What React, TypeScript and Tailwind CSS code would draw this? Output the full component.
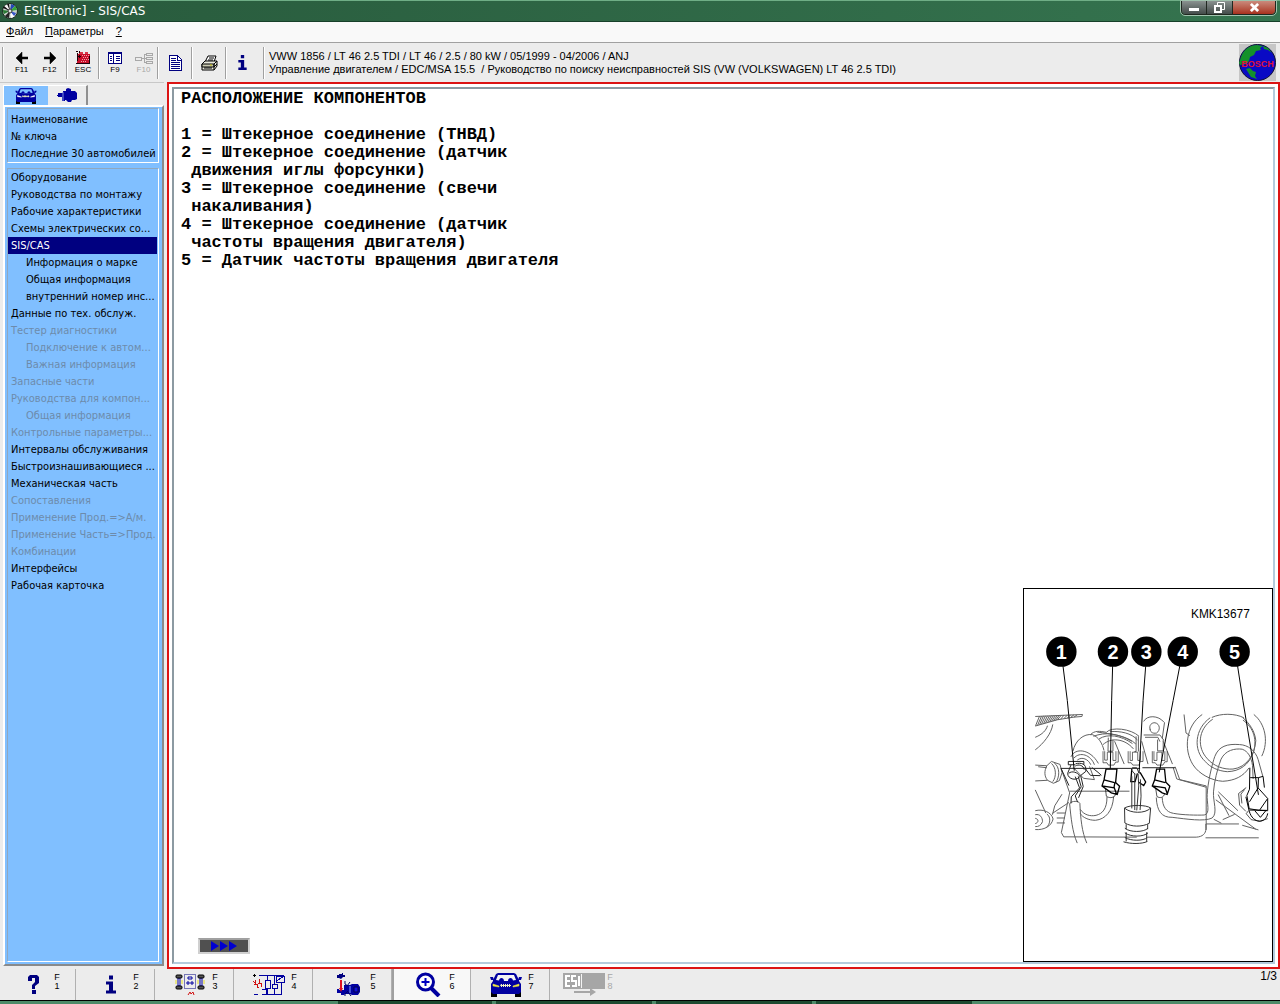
import type { ReactNode } from "react";

const TAHOMA = "font-['DejaVu_Sans_Condensed','Noto_Sans',sans-serif]";

const vehicleLinks = ["Наименование", "№ ключа", "Последние 30 автомобилей"];

type NavItem = { label: string; sub?: boolean; disabled?: boolean; active?: boolean };

const navItems: NavItem[] = [
  { label: "Оборудование" },
  { label: "Руководства по монтажу" },
  { label: "Рабочие характеристики" },
  { label: "Схемы электрических со..." },
  { label: "SIS/CAS", active: true },
  { label: "Информация о марке", sub: true },
  { label: "Общая информация", sub: true },
  { label: "внутренний номер инс...", sub: true },
  { label: "Данные по тех. обслуж." },
  { label: "Тестер диагностики", disabled: true },
  { label: "Подключение к автом...", sub: true, disabled: true },
  { label: "Важная информация", sub: true, disabled: true },
  { label: "Запасные части", disabled: true },
  { label: "Руководства для компон...", disabled: true },
  { label: "Общая информация", sub: true, disabled: true },
  { label: "Контрольные параметры...", disabled: true },
  { label: "Интервалы обслуживания" },
  { label: "Быстроизнашивающиеся ..." },
  { label: "Механическая часть" },
  { label: "Сопоставления", disabled: true },
  { label: "Применение Прод.=>А/м.", disabled: true },
  { label: "Применение Часть=>Прод.", disabled: true },
  { label: "Комбинации", disabled: true },
  { label: "Интерфейсы" },
  { label: "Рабочая карточка" },
];

const documentText = `РАСПОЛОЖЕНИЕ КОМПОНЕНТОВ

1 = Штекерное соединение (ТНВД)
2 = Штекерное соединение (датчик
 движения иглы форсунки)
3 = Штекерное соединение (свечи
 накаливания)
4 = Штекерное соединение (датчик
 частоты вращения двигателя)
5 = Датчик частоты вращения двигателя`;

function DiscIcon() {
  return (
    <svg viewBox="0 0 16 16" className="size-4" aria-hidden="true">
      <circle cx="8" cy="8" r="7.5" fill="#c9d2cb" stroke="#1b2a20" />
      <path d="M8 8 2 3.5A7 7 0 0 1 7 1Z" fill="#f4f4f4" />
      <path d="M8 8 9 1a7 7 0 0 1 4 2Z" fill="#2446b8" />
      <path d="M8 8 13 3a7 7 0 0 1 2 4Z" fill="#35a63a" />
      <path d="M8 8 1 7a7 7 0 0 0 1 4Z" fill="#2b7a35" />
      <path d="M8 8 3 13a7 7 0 0 0 4 2Z" fill="#222" />
      <path d="M8 8 9 15a7 7 0 0 0 4-2Z" fill="#fff" />
      <path d="M8 8 14 10a7 7 0 0 1-2 3Z" fill="#3756c8" />
      <path d="M1 5 8 8 2 3ZM5 1 8 8 7 1Z" fill="#111" />
      <circle cx="8" cy="8" r="2" fill="#dfe5e0" stroke="#333" />
    </svg>
  );
}

function ArrowIcon({ right = false }: { right?: boolean }) {
  return (
    <svg viewBox="0 0 12 12" className="size-3" aria-hidden="true">
      <path d={right ? "M0 5h6V0l6 6-6 6V7H0Z" : "M12 5H6V0L0 6l6 6V7h6Z"} fill="#000" stroke="#000" strokeWidth="0.5" />
    </svg>
  );
}

function EscIcon() {
  return (
    <svg viewBox="0 0 14 13" className="h-[13px] w-3.5" shapeRendering="crispEdges" aria-hidden="true">
      <path d="M1 3h13v9H1z" fill="#c8102a" />
      <path d="M3 1h4v2H3zM9 1h3v2H9z" fill="#d8374a" />
      <path d="M6 4h1v1H6zM8 4h1v1H8zM10 4h1v1h-1zM12 4h1v1h-1zM7 6h1v1H7zM9 6h1v1H9zM11 6h1v1h-1zM6 8h1v1H6zM8 8h1v1H8zM10 8h1v1h-1zM12 8h1v1h-1zM5 10h1v1H5zM7 10h1v1H7zM9 10h1v1H9z" fill="#f6a0aa" />
      <path d="M0 0h2v1H0zM3 0h1v2H3zM1 2h1v8H1zM3 4h1v3H3zM2 5h3v1H2zM0 12h14v1H0zM13 5h1v7h-1z" fill="#200008" />
    </svg>
  );
}

function ListIcon() {
  return (
    <svg viewBox="0 0 14 12" className="h-3 w-3.5" shapeRendering="crispEdges" aria-hidden="true">
      <path d="M0 0h14v12H0z" fill="#000080" />
      <path d="M1 2h4v9H1zM6 2h7v9H6z" fill="#fff" />
      <path d="M2 4h2v1H2zM2 6h2v1H2zM2 8h2v1H2zM8 4h4v1H8zM8 6h4v1H8zM8 8h4v1H8z" fill="#000080" />
    </svg>
  );
}

function TreeIcon() {
  return (
    <svg viewBox="0 0 18 12" className="h-3 w-[18px]" fill="none" shapeRendering="crispEdges" aria-hidden="true">
      <path d="M0 5h6v3H0zM6 6h3M9 2v8M9 2h2M9 6h2M9 10h2M11 1h6v2h-6zM11 5h6v2h-6zM11 9h6v2h-6z" stroke="#a8a8a8" />
    </svg>
  );
}

function PageIcon() {
  return (
    <svg viewBox="0 0 13 16" className="h-4 w-[13px]" shapeRendering="crispEdges" aria-hidden="true">
      <path d="M.5.5h8l4 4v11H.5z" fill="#fff" stroke="#000080" />
      <path d="M8 0v5h5" fill="none" stroke="#000080" />
      <path d="M2 3h5v1H2zM2 5h5v1H2zM2 7h9v1H2zM2 9h9v1H2zM2 11h9v1H2zM2 13h9v1H2z" fill="#000080" />
    </svg>
  );
}

function PrinterIcon() {
  return (
    <svg viewBox="0 0 17 16" className="h-4 w-[17px]" aria-hidden="true">
      <path d="M4 7 7 1h8l-2 6" fill="#fff" stroke="#000" />
      <path d="M8 3h5M7 5h5" stroke="#000" />
      <path d="M1 9 4 6h12v5l-3 4H1z" fill="#e8e8dc" stroke="#000" />
      <path d="M1 9h12v3H1zM13 9l3-3M13 12l3-3M13 15V9" fill="#c8c8b0" stroke="#000" />
      <path d="M3 13h8" stroke="#000" />
      <path d="M9 10h2" stroke="#c8c000" />
    </svg>
  );
}

function InfoIcon({ className }: { className: string }) {
  return (
    <svg viewBox="0 0 10 18" className={className} aria-hidden="true">
      <path d="M3 0h4v4H3zM0 6h7v9h3v3H0v-3h3V9H0z" fill="#000080" />
    </svg>
  );
}

function CarIcon({ className, detailed = false }: { className: string; detailed?: boolean }) {
  return (
    <svg viewBox="0 0 32 24" className={className} aria-hidden="true">
      <path d="M1 17h6v7H1zM25 17h6v7h-6z" fill="#000" />
      <path d="M6 1 8 0h16l2 1 3 6v1l2 3v8l-2 2H3l-2-2v-8l2-3V7z" fill="#0000a0" />
      <path d="M0 4h3l1 3H1zM32 4h-3l-1 3h3z" fill="#0000a0" />
      <path d="M8 2h16l2 5-6 1H12L6 7z" fill={detailed ? "#f4f4f4" : "#80bfff"} />
      <path d="M9 8c0-4 5-4 5 0zM18 8c0-4 5-4 5 0z" fill="#0000a0" />
      <path d="m3 11 6 2v1l-6-1zM29 11l-6 2v1l6-1z" fill={detailed ? "#f0e840" : "#fff"} stroke={detailed ? "#f0e840" : "#fff"} strokeWidth="0.5" />
      <path d="M11 11h1v1h1v-1h1v1h1v-1h1v1h1v-1h1v1h1v-1h1v1h1v1h-1v1h-1v-1h-1v1h-1v-1h-1v1h-1v-1h-1v1h-1v-1h-1v1h-1v-1h-1z" fill="#f0f0c0" />
    </svg>
  );
}

function PumpIcon() {
  return (
    <svg viewBox="0 0 20 15" className="h-[15px] w-5" aria-hidden="true">
      <path d="M0 7h1V5h5V3h3V1l2-1 3 1v2h4l2 2v6l-2 1h-3l-1 2h-3l-2-2H8v1H5V9H1V8H0z" fill="#0000a0" />
      <path d="M6 4v9" stroke="#8090e0" />
    </svg>
  );
}

function BoschLogo() {
  return (
    <svg viewBox="0 0 37 37" className="size-[37px] shrink-0" role="img" aria-label="BOSCH">
      <path d="M0 0h37v37H0z" fill="#c6c6c6" />
      <circle cx="18.5" cy="18.5" r="18" fill="#0a0ac4" stroke="#101030" />
      <path d="M2 13C5 5 11 1 18 1l6 1-3 2 1 2-5 1-2 4-4 2-1 4-3 3-6 1-1-2z" fill="#14912a" />
      <path d="m24 2 5 2 4 5-4-3-4-1zM7 25l4-1 3 3 3 1-1 4 2 3-6-2z" fill="#14912a" />
      <text x="18.5" y="23" textAnchor="middle" fontFamily="Liberation Sans, sans-serif" fontSize="9" fontWeight="bold" fill="#e01038">BOSCH</text>
    </svg>
  );
}

function SensorLayoutIcon() {
  return (
    <svg viewBox="0 0 30 22" className="h-[22px] w-[30px]" aria-hidden="true">
      <path d="M9.5.5h11v14h-11z" fill="none" stroke="#000080" strokeDasharray="1 1" />
      <path d="M13 3h4v2h-4zM12 8h2v2h-2zM16 8h2v2h-2zM3 4h2v8H3zM25 4h2v8h-2z" fill="none" stroke="#0000a0" />
      <path d="M1 6v4M7 6v4M23 6v4M29 6v4" stroke="#e8e020" />
      <g fill="#555" stroke="#000">
        <rect x="1" y="1" width="6" height="3" rx="1" /><rect x="23" y="1" width="6" height="3" rx="1" />
        <rect x="1" y="12" width="6" height="3" rx="1" /><rect x="23" y="12" width="6" height="3" rx="1" />
      </g>
      <path d="m13 21 2-3 1 2 2-2 1 3" fill="none" stroke="#d01010" />
    </svg>
  );
}

function CircuitIcon() {
  return (
    <svg viewBox="0 0 32 22" className="h-[22px] w-8" fill="none" shapeRendering="crispEdges" aria-hidden="true">
      <path d="M6 1.500h25M9 20.500h20M1 20.500h4M14.500 2v4M12 6h5v8h-5zM14.500 14v7M19 10h5v4h-5zM21.500 2v8M23 2h8v6h-8zM23 7l7-4M28.500 8v12M9 15h4v5M21 14v6" stroke="#0000a0" />
      <path d="M0 1.500h3M1.500 0v3" stroke="#000" />
      <path d="M2 6v4h2v4M6 5v4h2v4M1 10h2M5 9h2M0 7l3 3M4 12l2 2" stroke="#d01010" />
    </svg>
  );
}

function EngineIcon() {
  return (
    <svg viewBox="0 0 24 24" className="size-6" aria-hidden="true">
      <path d="M1 2h2V1h3V0h1v2h2v2H7l-2 2-2-1H1z" fill="#000080" />
      <path d="M5 7v10" stroke="#e01020" strokeWidth="2" />
      <path d="M1 16h2v1h5v-5h6l2-1h6l2 3v5l-2 3h-6l-2-1H9l-1 1H5v-2H1z" fill="#0000a0" />
      <path d="M3 15h4l-2 4z" fill="#e01020" />
      <path d="M9 8v3l3 2M14 9l-3 4M9 23v-2l3-3M15 23l-3-4" fill="none" stroke="#000060" />
      <path d="M14 13v7" stroke="#80a0ff" />
      <path d="M18 14h4v5h-4z" fill="#1010d8" stroke="#000050" />
    </svg>
  );
}

function MagnifierIcon() {
  return (
    <svg viewBox="0 0 26 25" className="h-[25px] w-[26px]" fill="none" aria-hidden="true">
      <circle cx="10.5" cy="10" r="8" fill="#fff" stroke="#0000a0" strokeWidth="3" />
      <path d="M10.500 6v8M6.500 10h8" stroke="#0000c0" strokeWidth="2" />
      <path d="m16 16 8 8" stroke="#0000a0" strokeWidth="4" />
    </svg>
  );
}

function EsiIcon() {
  return (
    <svg viewBox="0 0 43 24" className="h-6 w-[43px]" fill="none" aria-hidden="true">
      <path d="M0 0h42v16H0z" fill="#a6a6a6" />
      <path d="M18.500 1v14" stroke="#f4f4f4" />
      <path d="M7 3H3v10h4M3 8h4M13 3H9v5h4v5H9M16 3v10" stroke="#fff" strokeWidth="2" />
      <path d="M11 19h18" stroke="#a6a6a6" strokeWidth="2" /><path d="m27 15 6 4-6 4z" fill="#a6a6a6" />
    </svg>
  );
}

function QuestionIcon() {
  return (
    <svg viewBox="0 0 11 19" className="h-[19px] w-[11px]" aria-hidden="true">
      <path d="M0 2 2 0h7l2 2v6l-4 3v3H4v-4l3-3V3H4v3H0zM4 15h4v4H4z" fill="#000080" />
    </svg>
  );
}

function Rule({ className = "" }: { className?: string }) {
  return <span className={`h-8 w-0.5 shrink-0 border-r border-l border-r-white border-l-[#a0a0a0] ${className}`} />;
}

function ToolButton({ children, label, name, width, disabled }: { children: ReactNode; label?: string; name: string; width: string; disabled?: boolean }) {
  return (
    <button type="button" aria-label={name} disabled={disabled} className={`flex h-8 shrink-0 flex-col items-center justify-center gap-0.5 ${width} ${disabled ? "text-[#a8a8a8]" : "text-black"}`}>
      {children}
      {label && <span className="font-['Liberation_Sans',sans-serif] text-[8px] leading-[8px]">{label}</span>}
    </button>
  );
}

const functionKeys: { n: number; name: string; icon: ReactNode; active?: boolean; disabled?: boolean }[] = [
  { n: 1, name: "Справка", icon: <QuestionIcon /> },
  { n: 2, name: "Информация", icon: <InfoIcon className="h-[19px] w-2.5" /> },
  { n: 3, name: "Расположение", icon: <SensorLayoutIcon /> },
  { n: 4, name: "Схема", icon: <CircuitIcon /> },
  { n: 5, name: "Двигатель", icon: <EngineIcon /> },
  { n: 6, name: "Увеличить", icon: <MagnifierIcon />, active: true },
  { n: 7, name: "Автомобиль", icon: <CarIcon className="h-6 w-8" detailed /> },
  { n: 8, name: "ESI", icon: <EsiIcon />, disabled: true },
];

const callouts = [
  { n: 1, x: 122, to: "M127 -104 140 0 161 212" },
  { n: 2, x: 278, to: "M277 -104 274 0 270 205" },
  { n: 3, x: 379, to: "M377 -104 369 0 357 220" },
  { n: 4, x: 489, to: "M480 -104 460 0 418 217" },
  { n: 5, x: 646, to: "M655 -104 671 0 718 285" },
];

function ComponentDrawing() {
  return (
    <svg viewBox="9 -336 750 1122" className="block h-[372px] w-[248px]" fill="none" role="img" aria-label="KMK13677">
      <text x="514" y="-249" fontFamily="Liberation Sans, sans-serif" fontSize="36" fill="#000">KMK13677</text>
      <g stroke="#606060" strokeWidth="3">
        {/* toothed belt */}
        <path d="M43 48 186 42 184 48 160 50 110 58 43 77" />
        <path d="M44 76 56 47M50 75 62 47M56 73 68 46M62 71 74 46M68 70 80 46M74 68 86 46M80 67 92 45M86 65 98 45M92 63 104 45M98 61 110 45M104 60 116 44M110 58 122 44M120 56 130 44M130 54 140 44M140 53 150 43M150 51 160 43M160 50 170 43" />
        <path d="M80 76C76 90 65 102 43 111M96 72C92 100 68 130 43 149" />
        {/* left pipe */}
        <path d="M43 195 78 197 92 184 118 193 124 218 116 242 98 250 80 241 43 243M78 197C70 213 70 228 80 241M92 190C106 202 108 230 96 245M100 188C118 200 118 232 104 249M52 200 78 203" />
        <path d="M43 270 75 340M124 283 102 318 95 345M43 333C66 327 92 337 97 358 92 381 68 392 43 390M43 345C58 342 65 354 65 366 61 377 53 382 43 381M43 356C54 358 54 369 43 372M78 343C92 352 88 376 76 384M145 308 95 341M108 340H133M108 355H133M108 370H133" />
        {/* rear housing and hose loops */}
        <path d="M157 153C164 121 189 99 216 103 235 110 246 130 251 151M151 170C162 143 208 144 234 190M160 174C178 153 211 164 222 194M170 180C185 168 204 178 211 194M210 103C222 90 239 92 258 96 273 78 333 85 357 108M219 108C255 94 293 99 335 123M236 116C261 99 302 105 337 130M248 133C272 111 313 114 340 146M270 94C300 91 335 99 352 119M230 95C272 101 322 106 347 131M371 63C380 44 415 43 433 66M391 90C385 73 397 66 405 67 421 70 422 90 410 98 398 101 389 94 391 85M371 104H420L432 120M375 111H414L420 124M348 108V154H343M355 108V154M413 118V152H430V118M264 112 263 153H278V118M283 123 312 192M365 123 384 192M430 123 458 192" />
        <path d="M434 66 427 115M493 42 499 98 511 106" />
        {/* round cover */}
        <path d="M548 42C498 76 491 148 520 194 538 222 576 242 610 244 647 242 672 229 689 204M572 52C525 85 520 151 557 184 572 202 597 213 624 215 662 214 689 193 701 161 716 121 704 82 671 59M580 56C532 88 534 144 562 174 582 199 614 209 641 207 682 202 707 164 710 121 707 91 690 68 671 52M577 51C605 38 646 38 674 52M704 42C738 69 750 123 728 168" />
        {/* engine block contour */}
        <path d="M121 205 147 279 122 399 129 412 350 413M147 274H328M382 413H530C549 412 559 402 559 388V373H659M466 200 480 239 560 258V391M460 202 471 237 560 262M158 202 189 235 222 239 207 199M558 415H719M597 276 656 333M589 300 710 389M596 284 629 348M610 360 646 344M583 359 606 371M669 377 718 391" />
        {/* large cable */}
        <path d="M427 293C428 320 438 337 461 341 488 346 532 347 554 346 574 343 561 308 563 284 564 252 578 190 586 169 598 138 623 130 661 133 687 134 709 152 717 178L731 228M409 293C411 334 425 354 457 353 500 358 554 367 578 355 596 340 580 304 582 276 584 247 594 205 605 177 618 150 646 144 669 147 687 154 696 170 700 196L702 237" />
        {/* small cables */}
        <path d="M260 291C260 328 246 342 227 347 208 351 190 345 179 329M280 291C277 334 256 359 225 362 203 362 187 353 179 342M147 312C151 353 155 397 170 431M178 311C180 356 184 398 199 431M147 312C153 302 175 303 178 311" />
      </g>
      <g stroke="#222" strokeWidth="3">
        <path d="M121 205H360M367 203H466M121 205 145 257" />
        <path d="M143 184H190V194M143 184V194H164M151 195 141 220C141 238 170 246 181 226L196 214C199 190 181 187 165 191M144 220C154 211 172 217 177 228M164 198C174 191 189 196 191 209M164 230 177 264 152 291 151 311M173 229 182 261 164 288 171 307M181 229 188 260 174 294" />
        <path d="M248 153V188H260L264 195H281L286 186H294V153M253 153V180H261V156H278V181H287V153M324 153V188H333L338 195H357L360 184H369V153M330 153V181H337V156H353V181H361V153M397 153V188H406L411 195H429L435 185H442V153M402 153V181H411V156H426V181H435V153" strokeWidth="2" />
        <path d="M192 203 210 226 240 227M214 202 233 217M233 217 243 226" />
      </g>
      <g stroke="#000" strokeWidth="4">
        <path d="M257 207H290L286 248 298 259 291 284 273 279 245 258 251 240ZM251 240 283 248M245 258 282 264 289 283M281 264 284 247M410 207H434L438 247 450 259 442 284 427 279 397 258 404 240ZM404 240 436 248M397 258 436 264 443 283M335 207 332 245H345L352 220M360 217 377 246 371 257 356 247" />
        <path d="M255 264 258 289C266 295 277 295 284 288L287 279M407 264 411 290C420 296 431 294 434 282" strokeWidth="2" />
        <path d="M692 203 691 268 683 287 690 327 721 332 746 296V333L722 332M693 233H718L717 264 745 295M718 233 732 229 736 263M717 264 691 306M680 291 690 334C701 374 741 373 746 341M691 331 744 332M707 333 724 353 741 332" strokeWidth="3" />
        <path d="M681 263 658 281 661 316 680 335M676 269 665 283 668 311M688 333 681 342 696 360 722 365 746 357" strokeWidth="2" />
      </g>
      {/* corrugated sleeve */}
      <g stroke="#333" strokeWidth="3">
        <path d="M313 325C330 314 380 315 392 325L388 371C365 383 333 382 314 370ZM313 325C330 341 375 343 392 325M318 374V389M383 374V389M314 386C330 399 370 399 384 386M314 400C332 413 370 413 384 400M314 414C332 425 370 425 382 414M310 427C332 434 365 434 382 426M318 398V426M380 398V427" />
        <path d="M335 229V326M344 220V331M354 222 356 258 350 332M361 238 363 289 360 331M336 203H350L357 220M334 210 345 223" />
      </g>
      {callouts.map((c) => (
        <g key={c.n}>
          <path d={c.to} stroke="#000" strokeWidth="3" />
          <circle cx={c.x} cy="-148" r="46" fill="#000" />
          <text x={c.x} y="-127" textAnchor="middle" fontFamily="Liberation Sans, sans-serif" fontSize="60" fontWeight="bold" fill="#fff">{c.n}</text>
        </g>
      ))}
    </svg>
  );
}

export default function App() {
  return (
    <div className={`flex min-h-screen flex-col bg-[#ececec] text-black ${TAHOMA}`}>
      <header className="flex h-[22px] items-center border-t border-b border-t-[#6fae86] border-b-[#17402a] bg-gradient-to-r from-[#285a3c] to-[#35744f] pl-0.5">
        <DiscIcon />
        <h1 className="ml-1.5 text-[12px] leading-4 text-white font-['DejaVu_Sans',sans-serif]">ESI[tronic] - SIS/CAS</h1>
        <div className="mr-1 mb-auto ml-auto flex h-3.5 rounded-b border border-t-0 border-[#202820] outline outline-[#9fc3ad]">
          <button type="button" aria-label="Свернуть" className="flex w-6 items-center justify-center rounded-bl bg-gradient-to-b from-[#8a9290] to-[#444c4a]">
            <span className="mt-1 h-[3px] w-2.5 bg-white" />
          </button>
          <button type="button" aria-label="Восстановить" className="flex w-[27px] items-center justify-center border-x border-[#202820] bg-gradient-to-b from-[#8a9290] to-[#444c4a]">
            <svg viewBox="0 0 11 11" className="size-[11px]" fill="none" stroke="#fff" aria-hidden="true"><path d="M3.500 3V.5h7v7H8" /><path d="M1 4h6v6H1z" strokeWidth="2" /></svg>
          </button>
          <button type="button" aria-label="Закрыть" className="flex w-[42px] items-center justify-center rounded-br bg-gradient-to-b from-[#c98a7c] to-[#a82f1c]">
            <svg viewBox="0 0 10 10" className="size-[9px]" stroke="#fff" strokeWidth="3" aria-hidden="true"><path d="m1 1 8 8M9 1 1 9" /></svg>
          </button>
        </div>
      </header>

      <nav aria-label="Меню" className="flex h-[21px] items-center gap-3 border-b border-[#a0a0a0] bg-[#f9f9f9] pb-0.5 pl-1.5 font-['Liberation_Sans',sans-serif] text-[11px] leading-4">
        <button type="button"><u>Ф</u>айл</button>
        <button type="button"><u>П</u>араметры</button>
        <button type="button"><u>?</u></button>
      </nav>

      <div className="flex h-[39px] items-center pr-1">
        <Rule className="mx-0.5" />
        <ToolButton name="Назад" label="F11" width="w-[31px]"><ArrowIcon /></ToolButton>
        <ToolButton name="Вперёд" label="F12" width="w-[25px]"><ArrowIcon right /></ToolButton>
        <Rule className="ml-1" />
        <ToolButton name="Прервать" label="ESC" width="w-[30px]"><EscIcon /></ToolButton>
        <Rule />
        <ToolButton name="Список" label="F9" width="w-[30px]"><ListIcon /></ToolButton>
        <ToolButton name="Структура" label="F10" width="w-[27px]" disabled><TreeIcon /></ToolButton>
        <Rule />
        <ToolButton name="Документ" width="w-8"><PageIcon /></ToolButton>
        <Rule />
        <ToolButton name="Печать" width="w-8"><PrinterIcon /></ToolButton>
        <Rule />
        <ToolButton name="Информация" width="w-[30px]"><InfoIcon className="h-[15px] w-[9px]" /></ToolButton>
        <Rule className="ml-1.5" />
        <div className="ml-1 flex-1 font-['Liberation_Sans',sans-serif] text-[11px] leading-[13px] whitespace-pre">
          <p>VWW 1856 / LT 46 2.5 TDI / LT 46 / 2.5 / 80 kW / 05/1999 - 04/2006 / ANJ</p>
          <p>Управление двигателем / EDC/MSA 15.5  / Руководство по поиску неисправностей SIS (VW (VOLKSWAGEN) LT 46 2.5 TDI)</p>
        </div>
        <BoschLogo />
      </div>

      <div className="flex flex-1">
        <aside className="flex w-[164px] shrink-0 flex-col border-t border-[#c8c8c8] pt-0.5 pb-[3px] pl-[3px]">
          <div role="tablist" className="flex h-5 items-end">
            <button type="button" role="tab" aria-selected="true" aria-label="Автомобиль" className="flex h-5 w-[45px] items-center justify-center border-t border-l border-white bg-[#80bfff]">
              <CarIcon className="h-4 w-[22px]" />
            </button>
            <button type="button" role="tab" aria-selected="false" aria-label="Компонент" className="flex h-5 w-10 items-center justify-center border-t border-r-2 border-t-white border-r-[#909090]">
              <PumpIcon />
            </button>
          </div>
          <div className="flex flex-1 flex-col gap-[5px] border-2 border-t-white border-r-[#8a8a8a] border-b-[#8a8a8a] border-l-white bg-[#80bfff] pt-px pr-[3px] pb-0.5 pl-0.5 text-[11px] leading-[17px]">
            <ul className="border border-t-[#8fa8c0] border-r-white border-b-white border-l-[#8fa8c0] pt-0.5">
              {vehicleLinks.map((label) => (
                <li key={label}><a href="#" className="block pl-[3px] whitespace-nowrap">{label}</a></li>
              ))}
            </ul>
            <ul className="flex-1 border border-t-[#8fa8c0] border-r-white border-b-white border-l-[#8fa8c0] pr-px">
              {navItems.map((item, i) => (
                <li key={i}>
                  <a
                    href="#"
                    aria-disabled={item.disabled}
                    aria-current={item.active ? "page" : undefined}
                    className={`block whitespace-nowrap ${item.sub ? "pl-[18px]" : "pl-[3px]"} ${item.active ? "bg-[#000080] text-white" : item.disabled ? "text-[#6d8bab]" : ""}`}
                  >
                    {item.label}
                  </a>
                </li>
              ))}
            </ul>
          </div>
        </aside>

        <main className="ml-[3px] flex flex-1 border-2 border-[#dc1414] bg-white p-[3px]">
          <div className="flex flex-1 flex-col border-2 border-[#b4cbdc] border-t-[#8c9aa2] border-l-[#8c9aa2]">
            <pre className="pt-px pl-[7px] font-['Liberation_Mono',monospace] text-[17px] leading-[18px] font-bold">{documentText}</pre>
            <div className="mt-auto flex items-end justify-between">
              <button type="button" aria-label="Далее" className="mb-2 ml-6 flex h-4 w-[52px] items-center justify-center border-2 border-[#d0d0d0] border-t-[#a0a0a0] bg-[#505050]">
                <svg viewBox="0 0 26 10" className="h-2.5 w-[26px]" fill="#0000d0" aria-hidden="true"><path d="m0 0 8 5-8 5zM9 0l8 5-8 5zM18 0l8 5-8 5z" /></svg>
              </button>
              <figure className="border border-black bg-white"><ComponentDrawing /></figure>
            </div>
          </div>
        </main>
      </div>

      <footer>
        <div className="flex h-8 items-stretch border-b border-black font-['Liberation_Sans',sans-serif]">
          {functionKeys.map((key) => (
            <button
              key={key.n}
              type="button"
              aria-label={`F${key.n} ${key.name}`}
              disabled={key.disabled}
              className={`flex w-[79px] shrink-0 items-center justify-end border-r pr-[15px] pl-3 first:w-[76px] ${key.disabled ? "border-transparent text-[#a6a6a6]" : "border-[#b0b0b0]"} ${key.active ? "border-l-2 border-l-[#a0a0a0] bg-[#f8f8f8]" : ""}`}
            >
              <span className="flex flex-1 justify-center">{key.icon}</span>
              <span className="w-1.5 pb-1.5 text-[9px] leading-[9px]">F<br />{key.n}</span>
            </button>
          ))}
          <span className="mr-[3px] ml-auto text-[12px] leading-[14px]">1/3</span>
        </div>
        <div className="flex h-[3px] gap-1 bg-[#4d8a68] pl-[338px]">
          <span className="w-[154px] bg-[#1d4a30]" />
          <span className="w-[156px] bg-[#1d4a30]" />
          <span className="w-[156px] bg-[#1d4a30]" />
          <span className="w-[156px] bg-[#1d4a30]" />
        </div>
      </footer>
    </div>
  );
}
